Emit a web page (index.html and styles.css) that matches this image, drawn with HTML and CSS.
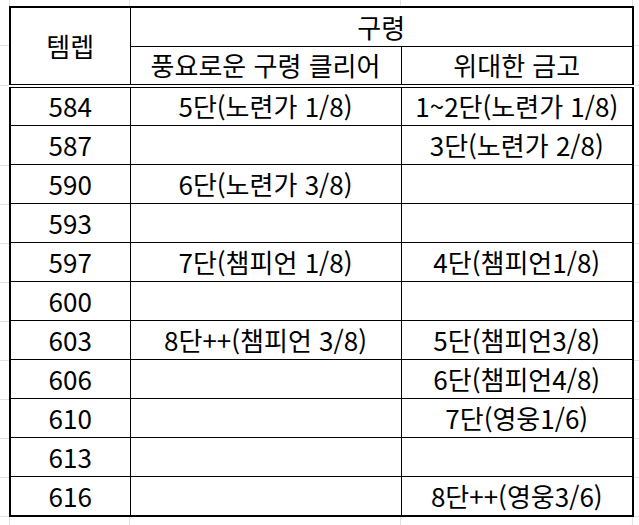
FILE: index.html
```html
<!DOCTYPE html>
<html lang="ko">
<head>
<meta charset="utf-8">
<title>구령 표</title>
<link rel="stylesheet" href="styles.css">
</head>
<body>
<div class="sheet">
  <table class="grid">
    <colgroup>
      <col class="c1">
      <col class="c2">
      <col class="c3">
    </colgroup>
    <thead>
      <tr class="h1">
        <th rowspan="2" class="hd-end">템렙</th>
        <th colspan="2">구령</th>
      </tr>
      <tr class="h2">
        <th class="hd-end">풍요로운 구령 클리어</th>
        <th class="hd-end">위대한 금고</th>
      </tr>
    </thead>
    <tbody>
      <tr><td>584</td><td>5단(노련가 1/8)</td><td>1~2단(노련가 1/8)</td></tr>
      <tr><td>587</td><td></td><td>3단(노련가 2/8)</td></tr>
      <tr><td>590</td><td>6단(노련가 3/8)</td><td></td></tr>
      <tr><td>593</td><td></td><td></td></tr>
      <tr><td>597</td><td>7단(챔피언 1/8)</td><td>4단(챔피언1/8)</td></tr>
      <tr><td>600</td><td></td><td></td></tr>
      <tr><td>603</td><td>8단++(챔피언 3/8)</td><td>5단(챔피언3/8)</td></tr>
      <tr><td>606</td><td></td><td>6단(챔피언4/8)</td></tr>
      <tr><td>610</td><td></td><td>7단(영웅1/6)</td></tr>
      <tr><td>613</td><td></td><td></td></tr>
      <tr class="last"><td>616</td><td></td><td>8단++(영웅3/6)</td></tr>
    </tbody>
  </table>
</div>
</body>
</html>
```

FILE: styles.css
```css
html, body {
  margin: 0;
  padding: 0;
  background: #ffffff;
}

.sheet {
  width: 639px;
  height: 525px;
  overflow: hidden;
  box-sizing: border-box;
  padding-top: 6px;
  padding-left: 9px;
  background-color: #ffffff;
  background-image:
    linear-gradient(to right,
      transparent 9px, #dfe2ea 9px, #dfe2ea 10px, transparent 10px,
      transparent 129px, #dfe2ea 129px, #dfe2ea 130px, transparent 130px,
      transparent 400px, #dfe2ea 400px, #dfe2ea 401px, transparent 401px,
      transparent 632px, #dfe2ea 632px, #dfe2ea 633px, transparent 633px),
    linear-gradient(to bottom,
      transparent 45px, #dfe2ea 45px, #dfe2ea 46px, transparent 46px,
      transparent 85px, #dfe2ea 85px, #dfe2ea 86px, transparent 86px),
    repeating-linear-gradient(to bottom,
      transparent 0, transparent 38px, #dfe2ea 38px, #dfe2ea 39px);
  background-size: 100% 100%, 100% 100%, 100% 400px;
  background-position: 0 0, 0 0, 0 127px;
  background-repeat: no-repeat;
  font-family: "Noto Sans CJK KR", "Noto Sans", sans-serif;
  color: #000000;
}

.grid {
  border-collapse: collapse;
  table-layout: fixed;
  width: 623px;
  background: #ffffff;
  border: 2px solid #000000;
  font-size: 26px;
}

.c1 { width: 120px; }
.c2 { width: 271px; }
.c3 { width: 232px; }

.grid th,
.grid td {
  border: 1px solid #000000;
  padding: 0;
  text-align: center;
  vertical-align: middle;
  font-weight: normal;
  line-height: 1;
  white-space: nowrap;
}

.grid tr { height: 39px; }
.grid .h1 { height: 39px; }
.grid .h2 { height: 40px; }
.grid .last { height: 40px; }

.grid .hd-end {
  border-bottom: 4px double #000000;
}
```
